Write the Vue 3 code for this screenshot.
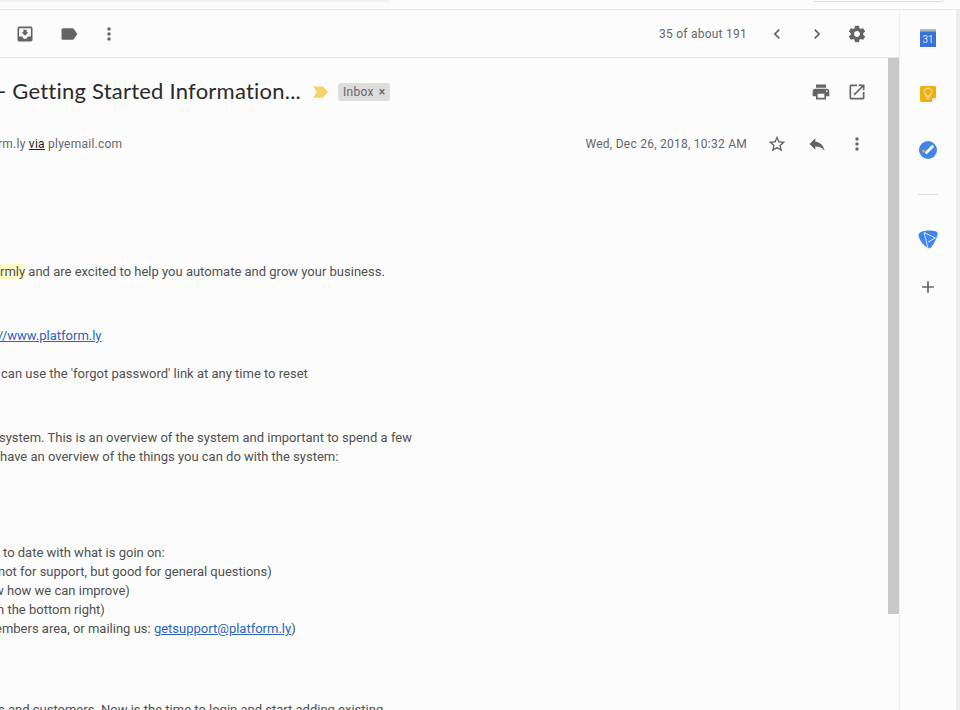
<script setup>
const P = {
  inbox: 'M19 3H4.99c-1.11 0-1.98.89-1.98 2L3 19c0 1.1.88 2 1.99 2H19c1.1 0 2-.9 2-2V5c0-1.11-.9-2-2-2zm0 12h-4c0 1.66-1.35 3-3 3s-3-1.34-3-3H4.99V5H19v10zm-3-5h-2V7h-4v3H8l4 4 4-4z',
  label: 'M17.63 5.84C17.27 5.33 16.67 5 16 5L5 5.01C3.9 5.01 3 5.9 3 7v10c0 1.1.9 1.99 2 1.99L16 19c.67 0 1.27-.33 1.63-.84L22 12l-4.37-6.16z',
  more: 'M12 8c1.1 0 2-.9 2-2s-.9-2-2-2-2 .9-2 2 .9 2 2 2zm0 2c-1.1 0-2 .9-2 2s.9 2 2 2 2-.9 2-2-.9-2-2-2zm0 6c-1.1 0-2 .9-2 2s.9 2 2 2 2-.9 2-2-.9-2-2-2z',
  prev: 'M15.41 7.41L14 6l-6 6 6 6 1.41-1.41L10.83 12z',
  next: 'M10 6L8.59 7.41 13.17 12l-4.58 4.59L10 18l6-6z',
  gear: 'M19.43 12.98c.04-.32.07-.64.07-.98s-.03-.66-.07-.98l2.11-1.65c.19-.15.24-.42.12-.64l-2-3.46c-.12-.22-.39-.3-.61-.22l-2.49 1c-.52-.4-1.08-.73-1.69-.98l-.38-2.65C14.46 2.18 14.25 2 14 2h-4c-.25 0-.46.18-.49.42l-.38 2.65c-.61.25-1.17.59-1.69.98l-2.49-1c-.23-.09-.49 0-.61.22l-2 3.46c-.13.22-.07.49.12.64l2.11 1.65c-.04.32-.07.65-.07.98s.03.66.07.98l-2.11 1.65c-.19.15-.24.42-.12.64l2 3.46c.12.22.39.3.61.22l2.49-1c.52.4 1.08.73 1.69.98l.38 2.65c.03.24.24.42.49.42h4c.25 0 .46-.18.49-.42l.38-2.65c.61-.25 1.17-.59 1.69-.98l2.49 1c.23.09.49 0 .61-.22l2-3.46c.12-.22.07-.49-.12-.64l-2.11-1.65zM12 15.5c-1.93 0-3.5-1.57-3.5-3.5s1.57-3.5 3.5-3.5 3.5 1.57 3.5 3.5-1.57 3.5-3.5 3.5z',
  print: 'M19 8H5c-1.66 0-3 1.34-3 3v6h4v4h12v-4h4v-6c0-1.66-1.34-3-3-3zm-3 11H8v-5h8v5zm3-7c-.55 0-1-.45-1-1s.45-1 1-1 1 .45 1 1-.45 1-1 1zm-1-9H6v4h12V3z',
  open: 'M19 19H5V5h7V3H5c-1.11 0-2 .9-2 2v14c0 1.1.89 2 2 2h14c1.1 0 2-.9 2-2v-7h-2v7zM14 3v2h3.59l-9.83 9.83 1.41 1.41L19 6.41V10h2V3h-7z',
  star: 'M22 9.24l-7.19-.62L12 2 9.19 8.63 2 9.24l5.46 4.73L5.82 21 12 17.27 18.18 21l-1.63-7.03L22 9.24zM12 15.4l-3.76 2.27 1-4.28-3.32-2.88 4.38-.38L12 6.1l1.71 4.04 4.38.38-3.32 2.88 1 4.28L12 15.4z',
  reply: 'M10 9V5l-7 7 7 7v-4.1c5 0 8.5 1.6 11 5.1-1-5-4-10-11-11z',
  add: 'M19 13h-6v6h-2v-6H5v-2h6V5h2v6h6v2z'
}

// gap = free space above the line, x = how far the line starts past the left edge
const lines = [
  { id: 1, gap: 0, x: 0, mark: 'rmly', text: ' and are excited to help you automate and grow your business.' },
  { id: 2, gap: 45, x: -2, link: '//www.platform.ly' },
  { id: 3, gap: 19, x: 1, text: 'can use the \'forgot password\' link at any time to reset' },
  { id: 4, gap: 45, x: -1, text: 'system. This is an overview of the system and important to spend a few' },
  { id: 5, gap: 0, x: 0, text: 'have an overview of the things you can do with the system:' },
  { id: 6, gap: 77, x: 3, text: 'to date with what is goin on:' },
  { id: 7, gap: 0, x: -2, text: 'not for support, but good for general questions)' },
  { id: 8, gap: 0, x: -6, text: 'w how we can improve)' },
  { id: 9, gap: 0, x: -3, text: 'n the bottom right)' },
  { id: 10, gap: 0, x: -5, text: 'embers area, or mailing us: ', link: 'getsupport@platform.ly', after: ')' },
  { id: 11, gap: 62, x: -2, text: 's and customers. Now is the time to login and start adding existing' }
]
</script>

<template>
  <div class="page">
    <div class="topbar">
      <div class="strip"></div>
      <div class="search"></div>
    </div>
    <div class="workspace">
      <main class="main">
        <div class="toolbar">
          <div class="tools">
            <button class="ib"><svg viewBox="0 0 24 24"><path :d="P.inbox" /></svg></button>
            <button class="ib label-btn"><svg viewBox="0 0 24 24"><path :d="P.label" /></svg></button>
            <button class="ib"><svg viewBox="0 0 24 24"><path :d="P.more" /></svg></button>
          </div>
          <div class="tools">
            <span class="count">35 of about 191</span>
            <button class="ib"><svg viewBox="0 0 24 24"><path :d="P.prev" /></svg></button>
            <button class="ib"><svg viewBox="0 0 24 24"><path :d="P.next" /></svg></button>
            <button class="ib"><svg viewBox="0 0 24 24"><path :d="P.gear" /></svg></button>
          </div>
        </div>
        <div class="scroller">
          <div class="message">
            <div class="subject">
              <h1 class="title">- Getting Started Information...</h1>
              <svg class="marker" viewBox="0 0 16 12"><path d="M0 0h10.500L16 6l-5.500 6H0l4-6z" /></svg>
              <span class="chip">Inbox <b class="x">×</b></span>
              <span class="grow"></span>
              <button class="ib sib"><svg viewBox="0 0 24 24"><path :d="P.print" /></svg></button>
              <button class="ib sib"><svg viewBox="0 0 24 24"><path :d="P.open" /></svg></button>
            </div>
            <div class="sender">
              <span class="addr">rm.ly <u class="via">via</u> plyemail.com</span>
              <span class="grow"></span>
              <span class="date">Wed, Dec 26, 2018, 10:32 AM</span>
              <button class="ib"><svg viewBox="0 0 24 24"><path :d="P.star" /></svg></button>
              <button class="ib"><svg viewBox="0 0 24 24"><path :d="P.reply" /></svg></button>
              <button class="ib"><svg viewBox="0 0 24 24"><path :d="P.more" /></svg></button>
            </div>
            <div class="body">
              <div
                v-for="l in lines"
                :key="l.id"
                class="line"
                :style="{ marginTop: l.gap + 'px', marginLeft: l.x + 'px' }"
              ><mark v-if="l.mark" class="hl">{{ l.mark }}</mark>{{ l.text }}<a v-if="l.link" class="lnk">{{ l.link }}</a>{{ l.after }}</div>
            </div>
          </div>
          <div class="track"><div class="thumb"></div></div>
        </div>
      </main>
      <aside class="rail">
        <div class="slot">
          <svg class="app" viewBox="0 0 16 18">
            <rect x="0" y="0" width="16" height="3" fill="#b4b7bc" />
            <rect x="0" y="2.500" width="16" height="15.500" fill="#3a72d8" />
            <text x="8" y="14" text-anchor="middle" class="cal">31</text>
          </svg>
        </div>
        <div class="slot">
          <svg class="app" viewBox="0 0 16 16">
            <path d="M1.500 0h13A1.500 1.500 0 0 1 16 1.500V12l-4 4H1.500A1.500 1.500 0 0 1 0 14.500v-13A1.500 1.500 0 0 1 1.500 0z" fill="#f2b010" />
            <path d="M16 12l-4 4v-4z" fill="#f5eccd" />
            <path d="M6.300 10.200V9.200C5 8.500 4.300 7.300 4.300 6a3.700 3.700 0 0 1 7.400 0c0 1.300-.7 2.500-2 3.200v1z" fill="none" stroke="#fbe9a6" stroke-width="1.100" />
            <path d="M6.500 12.300h3" stroke="#fbe9a6" stroke-width="1.200" />
          </svg>
        </div>
        <div class="slot">
          <svg class="app round" viewBox="0 0 18 18">
            <circle cx="9" cy="9" r="9" fill="#3f85ea" />
            <path d="M7.500 11.500l6-6" stroke="#fff" stroke-width="2.800" stroke-linecap="round" />
            <circle cx="4.500" cy="10" r="1.500" fill="#eea52a" />
          </svg>
        </div>
        <div class="sep"></div>
        <div class="slot short">
          <svg class="app tri" viewBox="0 0 20 20">
            <path d="M3 3C7 1 14 1 18 2.500c1.500.5 2 1.800 1.500 3.500-1 3.500-3 8.500-6.500 12.500-1 1-2 1-3 .5C6 17 2 12 .5 7 .1 5.500 1.300 3.800 3 3z" fill="#3f85ea" />
            <path d="M6 3.500l4 15.500M6 3.500l11.500 5.500-7.500 4" fill="none" stroke="#dbe8fb" stroke-width="1" />
          </svg>
        </div>
        <div class="slot short">
          <svg class="add" viewBox="0 0 24 24"><path :d="P.add" /></svg>
        </div>
      </aside>
      <div class="edge"></div>
    </div>
  </div>
</template>

<style scoped>
.page {
  width: 960px;
  height: 710px;
  overflow: hidden;
  display: flex;
  flex-direction: column;
  background: #fcfcfc;
  font-family: Roboto, "Liberation Sans", sans-serif;
  color: #4f4f4f;
}
.topbar {
  height: 9px;
  flex: none;
  display: flex;
  align-items: flex-start;
  border-bottom: 1px solid #e9e9e9;
  background: #fcfcfc;
}
.strip {
  width: 390px;
  height: 2px;
  background: #f0f1f5;
}
.search {
  width: 128px;
  height: 1px;
  margin-left: 423px;
  border: 1px solid #dcdcdc;
  border-top: 0;
  border-radius: 0 0 5px 5px;
  background: #fff;
}
.workspace {
  flex: 1;
  min-height: 0;
  display: flex;
}
.main {
  width: 899px;
  flex: none;
  display: flex;
  flex-direction: column;
  min-height: 0;
}
.toolbar {
  height: 47px;
  flex: none;
  display: flex;
  align-items: center;
  justify-content: space-between;
  padding: 0 22px 0 5px;
  border-bottom: 1px solid #e6e6e6;
}
.tools {
  display: flex;
  align-items: center;
}
.ib {
  width: 40px;
  height: 40px;
  flex: none;
  border: 0;
  padding: 0;
  background: none;
  display: flex;
  align-items: center;
  justify-content: center;
}
.ib svg {
  width: 20px;
  height: 20px;
  fill: #646464;
}
.label-btn {
  margin-left: 4px;
}
.count {
  font-size: 12px;
  letter-spacing: .25px;
  color: #666;
  margin-right: 10px;
}
.scroller {
  flex: 1;
  min-height: 0;
  display: flex;
}
.message {
  flex: 1;
  min-width: 0;
  overflow: hidden;
}
.subject {
  height: 68px;
  display: flex;
  align-items: center;
  padding-right: 13px;
}
.title {
  margin: 0 0 4px -2px;
  font-family: Lato, "Open Sans", sans-serif;
  font-weight: 400;
  font-size: 22px;
  letter-spacing: .23px;
  color: #2a2a2a;
  white-space: nowrap;
}
.marker {
  width: 15px;
  height: 12px;
  margin-left: 12px;
  fill: #f6d36a;
}
.chip {
  margin-left: 10px;
  height: 18px;
  padding: 0 5px;
  border-radius: 3px;
  background: #dddddd;
  font-size: 12px;
  letter-spacing: .25px;
  line-height: 18px;
  color: #666;
}
.x {
  font-weight: 500;
  margin-left: 2px;
}
.grow {
  flex: 1;
}
.sib {
  width: 36px;
}
.sender {
  height: 36px;
  display: flex;
  align-items: center;
  padding-right: 11px;
  font-size: 12px;
  letter-spacing: .25px;
  color: #666;
}
.addr {
  margin-left: -2px;
}
.via {
  color: #222;
}
.date {
  margin-right: 10px;
}
.body {
  padding-top: 100px;
  font-size: 13px;
  line-height: 19px;
  color: #505050;
  white-space: pre;
}
.line {
  height: 19px;
}
.hl {
  background: #fdfbc8;
  color: inherit;
}
.lnk {
  color: #2a63c0;
  text-decoration: underline;
}
.track {
  width: 11px;
  flex: none;
}
.thumb {
  height: 556px;
  background: #c8c8c8;
}
.rail {
  width: 56px;
  flex: none;
  border-left: 1px solid #efefef;
  display: flex;
  flex-direction: column;
  align-items: center;
}
.slot {
  height: 56px;
  width: 100%;
  flex: none;
  display: flex;
  align-items: center;
  justify-content: center;
}
.slot.short {
  height: 48px;
}
.app {
  width: 16px;
  height: 18px;
}
.round {
  width: 18px;
}
.tri {
  width: 20px;
  height: 20px;
}
.cal {
  font-size: 10px;
  fill: #d5e3fa;
  font-family: Roboto, sans-serif;
}
.sep {
  width: 20px;
  height: 1px;
  flex: none;
  background: #dedede;
  margin: 16px 0 20px;
}
.add {
  width: 20px;
  height: 20px;
  fill: #646464;
}
.edge {
  width: 4px;
  flex: none;
  background: #ececec;
}
</style>
